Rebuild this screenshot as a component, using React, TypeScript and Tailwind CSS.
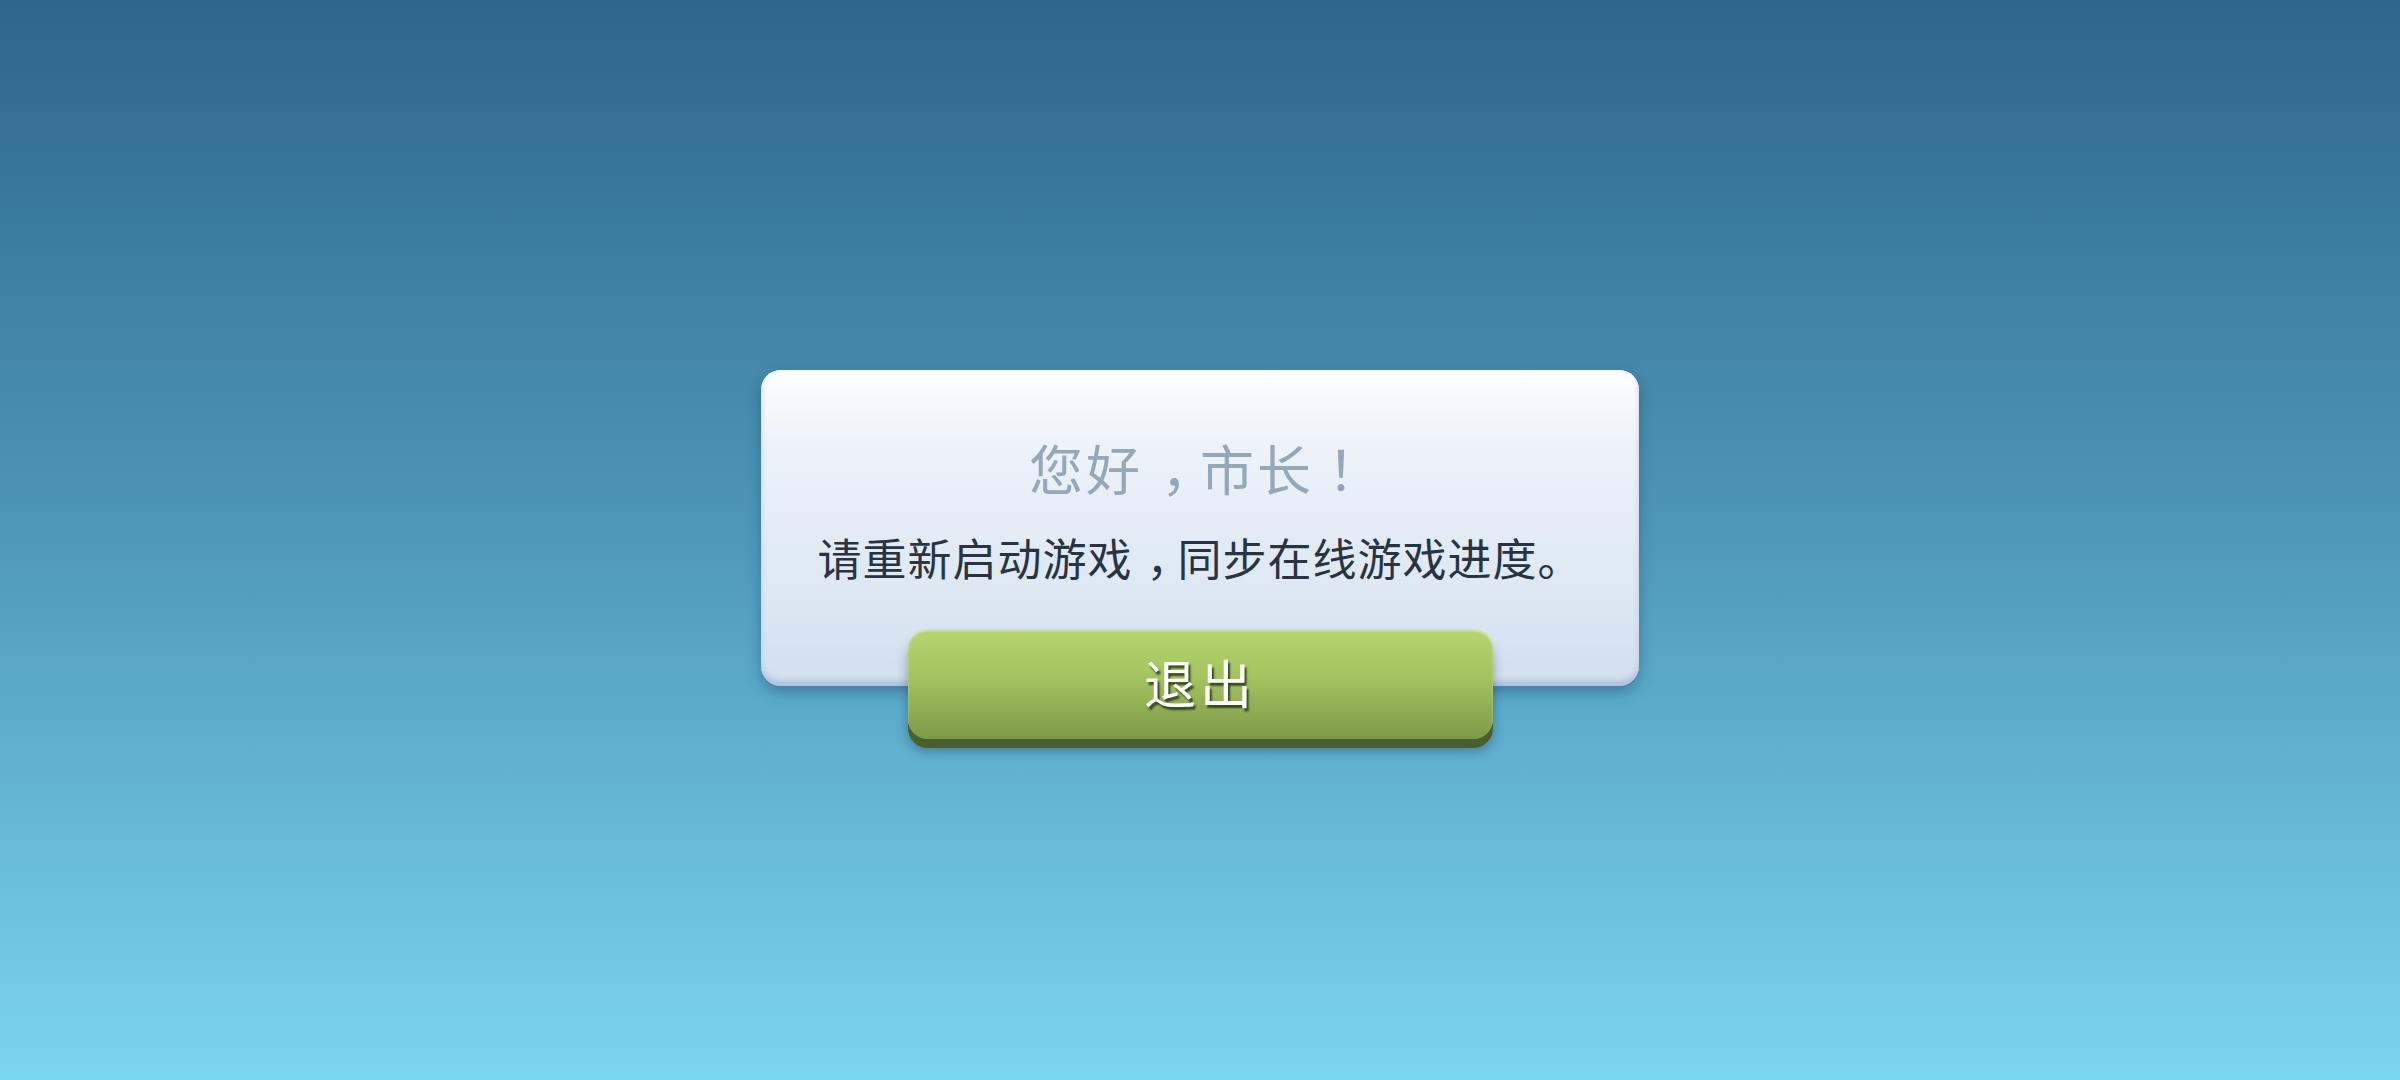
import React from "react";

const cjk = { fontFamily: '"Noto Sans CJK SC", "Noto Sans", sans-serif' };

// Korean cut of the font draws ！ centred in the cell
function Bang({ children }: { children: React.ReactNode }) {
  return <span className="[font-family:'Noto_Sans_CJK_KR',sans-serif]">{children}</span>;
}

// fullwidth comma pushed to the middle of its cell
function Comma({ className }: { className: string }) {
  return <span className={className}>，</span>;
}

export default function App() {
  return (
    <div
      className="w-full h-[1080px] flex flex-col items-center pt-[370px] bg-[linear-gradient(to_bottom,#2d6689,#4f98ba_50%,#7ad5f2)]"
      style={cjk}
    >
      {/* Dialog card */}
      <div className="w-[878px] h-[316px] rounded-[20px] flex flex-col items-center pt-[66px] bg-[linear-gradient(to_bottom,#fdfeff,#eef3fa_22%,#dde8f3_70%,#d0dfee)] shadow-[0_6px_14px_rgba(10,50,80,0.35),inset_0_-5px_5px_rgba(130,160,200,0.45),inset_0_2px_2px_rgba(255,255,255,0.9)]">
        <h1 className="text-[54px] leading-[64px] tracking-[3px] text-[#93a8ba] font-normal">
          您好<Comma className="pl-[18px] tracking-[-15px]" />市长<Bang>！</Bang>
        </h1>
        <p className="mt-[29px] text-[44px] leading-[56px] tracking-[1px] text-[#283441]">
          请重新启动游戏<Comma className="pl-[14px] tracking-[-13px]" />同步在线游戏进度。
        </p>
      </div>

      {/* Exit button */}
      <button
        className="relative z-10 -mt-[57px] w-[585px] h-[110px] rounded-[20px] bg-[linear-gradient(to_bottom,#b7d671,#a2c35f_45%,#7c9a48)] shadow-[0_9px_0_#4a5f2e,0_12px_12px_rgba(0,30,50,0.35),inset_0_2px_2px_rgba(230,245,190,0.6)] flex items-center justify-center"
      >
        <span className="-mt-[4px] text-[52px] leading-none tracking-[4px] text-white [text-shadow:2px_3px_2px_rgba(35,50,15,0.85)]">
          退出
        </span>
      </button>
    </div>
  );
}
